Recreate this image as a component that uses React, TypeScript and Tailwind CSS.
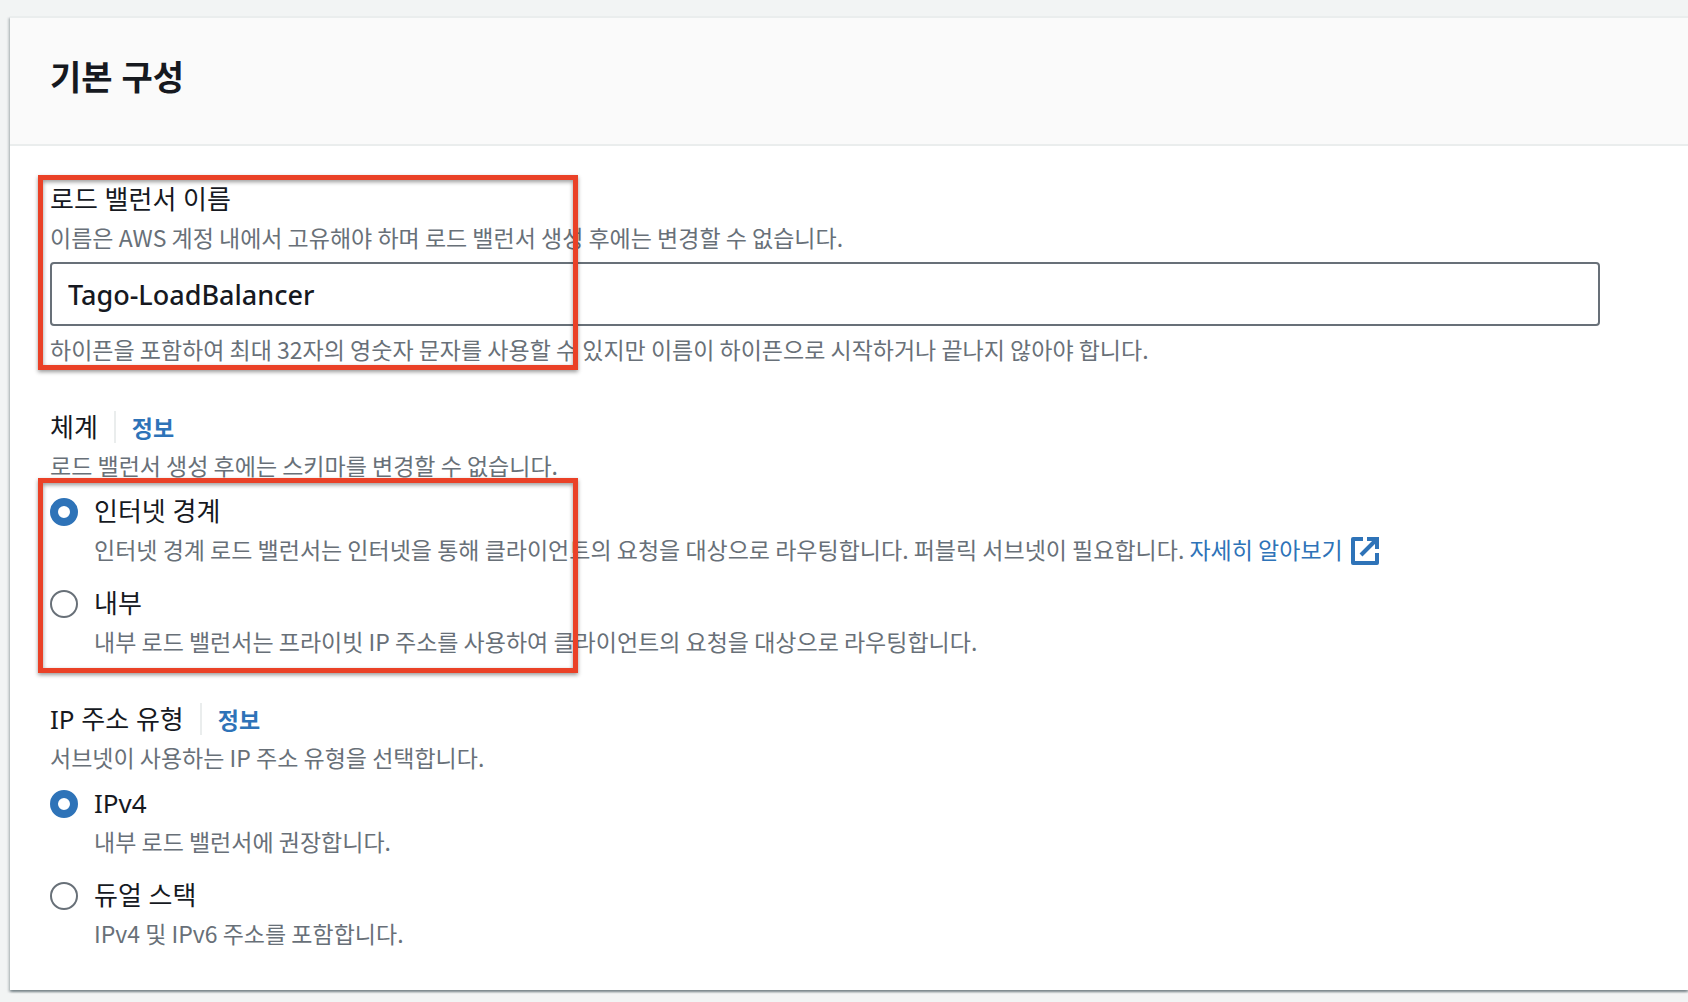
import { useState } from 'react';
import type { ReactNode } from 'react';

function Highlight({ className }: { className: string }) {
  return (
    <div
      aria-hidden="true"
      className={`pointer-events-none absolute -left-3 h-[195px] w-[540px] border-5 border-[#ea4127] shadow-[0_2px_4px_rgba(0,0,0,0.4),inset_0_2px_4px_rgba(0,0,0,0.4)] ${className}`}
    />
  );
}

function ExternalIcon() {
  return (
    <svg viewBox="0 0 28 28" className="ml-2 inline-block h-7 w-7 align-[-6px]" fill="none" aria-hidden="true">
      <path d="M12 2H2v24h24V16" stroke="currentColor" strokeWidth="4" strokeLinejoin="round" />
      <path d="M10 18 24 4" stroke="currentColor" strokeWidth="4" />
      <path d="M16 0h12v12h-4V4h-8z" fill="currentColor" />
    </svg>
  );
}

function Hint({ children }: { children: ReactNode }) {
  return (
    <p className="pb-[2px] font-['Noto_Sans_CJK_KR',sans-serif] text-[23px] leading-[34px] text-[#687078]">
      {children}
    </p>
  );
}

function GroupLabel({ id, children }: { id: string; children: ReactNode }) {
  return (
    <div className="flex h-11 items-center pt-[2px]">
      <span id={id} className="text-[26px] leading-[42px]">
        {children}
      </span>
      <span className="ml-4 flex h-8 items-center border-l-2 border-[#eaeded] pl-4">
        <a href="#info" className="pt-[2px] text-[23px] leading-8 font-bold text-[#2e73b8]">
          정보
        </a>
      </span>
    </div>
  );
}

type OptionProps = {
  name: string;
  value: string;
  label: string;
  selected: string;
  onSelect: (value: string) => void;
  children: ReactNode;
};

function Option({ name, value, label, selected, onSelect, children }: OptionProps) {
  const id = `${name}-${value}`;

  return (
    <div>
      <div className="flex h-10 items-center gap-4">
        <input
          type="radio"
          id={id}
          name={name}
          value={value}
          checked={selected === value}
          onChange={() => onSelect(value)}
          className="h-7 w-7 shrink-0 appearance-none rounded-full border-2 border-[#687078] bg-white checked:border-8 checked:border-[#2e73b8]"
        />
        <label htmlFor={id} className="pb-[2px] text-[26px] leading-[38px]">
          {label}
        </label>
      </div>
      <div className="pl-11">
        <Hint>{children}</Hint>
      </div>
    </div>
  );
}

export default function App() {
  const [name, setName] = useState('Tago-LoadBalancer');
  const [scheme, setScheme] = useState('internet');
  const [ipType, setIpType] = useState('ipv4');

  return (
    <div className="min-h-screen overflow-x-hidden bg-[#f2f4f4] pt-4 pb-3 pl-[10px] font-['Noto_Sans','Noto_Sans_CJK_KR',sans-serif] text-[#16191f]">
      <section className="border-t-2 border-[#eaeded] bg-white shadow-[0_2px_2px_rgba(0,28,36,0.3),2px_2px_2px_rgba(0,28,36,0.15),-2px_2px_2px_rgba(0,28,36,0.15)]">
        <header className="border-b-2 border-[#eaeded] bg-[#fafafa] px-10 pt-[37px] pb-[45px]">
          <h2 className="text-[34px] leading-[44px] font-bold">기본 구성</h2>
        </header>

        <div className="flex flex-col gap-9 pt-[30px] pr-[88px] pb-[38px] pl-10">
          <div className="relative">
            <label htmlFor="lb-name" className="block pt-[2px] text-[26px] leading-[42px]">
              로드 밸런서 이름
            </label>
            <Hint>이름은 AWS 계정 내에서 고유해야 하며 로드 밸런서 생성 후에는 변경할 수 없습니다.</Hint>
            <input
              id="lb-name"
              type="text"
              value={name}
              onChange={(e) => setName(e.target.value)}
              className="my-[6px] block h-16 w-full rounded border-2 border-[#687078] bg-white px-4 text-[27px] font-medium"
            />
            <Hint>
              하이픈을 포함하여 최대 32자의 영숫자 문자를 사용할 수 있지만 이름이 하이픈으로 시작하거나 끝나지 않아야 합니다.
            </Hint>
            <Highlight className="-top-px" />
          </div>

          <div role="radiogroup" aria-labelledby="scheme-label">
            <GroupLabel id="scheme-label">체계</GroupLabel>
            <Hint>로드 밸런서 생성 후에는 스키마를 변경할 수 없습니다.</Hint>
            <div className="relative mt-2 flex flex-col gap-4">
              <Option name="scheme" value="internet" label="인터넷 경계" selected={scheme} onSelect={setScheme}>
                인터넷 경계 로드 밸런서는 인터넷을 통해 클라이언트의 요청을 대상으로 라우팅합니다. 퍼블릭 서브넷이 필요합니다.{' '}
                <a href="#learn-more" className="text-[#2e73b8]">
                  자세히 알아보기
                  <ExternalIcon />
                </a>
              </Option>
              <Option name="scheme" value="internal" label="내부" selected={scheme} onSelect={setScheme}>
                내부 로드 밸런서는 프라이빗 IP 주소를 사용하여 클라이언트의 요청을 대상으로 라우팅합니다.
              </Option>
              <Highlight className="-top-[14px]" />
            </div>
          </div>

          <div role="radiogroup" aria-labelledby="ip-label">
            <GroupLabel id="ip-label">IP 주소 유형</GroupLabel>
            <Hint>서브넷이 사용하는 IP 주소 유형을 선택합니다.</Hint>
            <div className="mt-2 flex flex-col gap-4">
              <Option name="ip-type" value="ipv4" label="IPv4" selected={ipType} onSelect={setIpType}>
                내부 로드 밸런서에 권장합니다.
              </Option>
              <Option name="ip-type" value="dualstack" label="듀얼 스택" selected={ipType} onSelect={setIpType}>
                IPv4 및 IPv6 주소를 포함합니다.
              </Option>
            </div>
          </div>
        </div>
      </section>
    </div>
  );
}
